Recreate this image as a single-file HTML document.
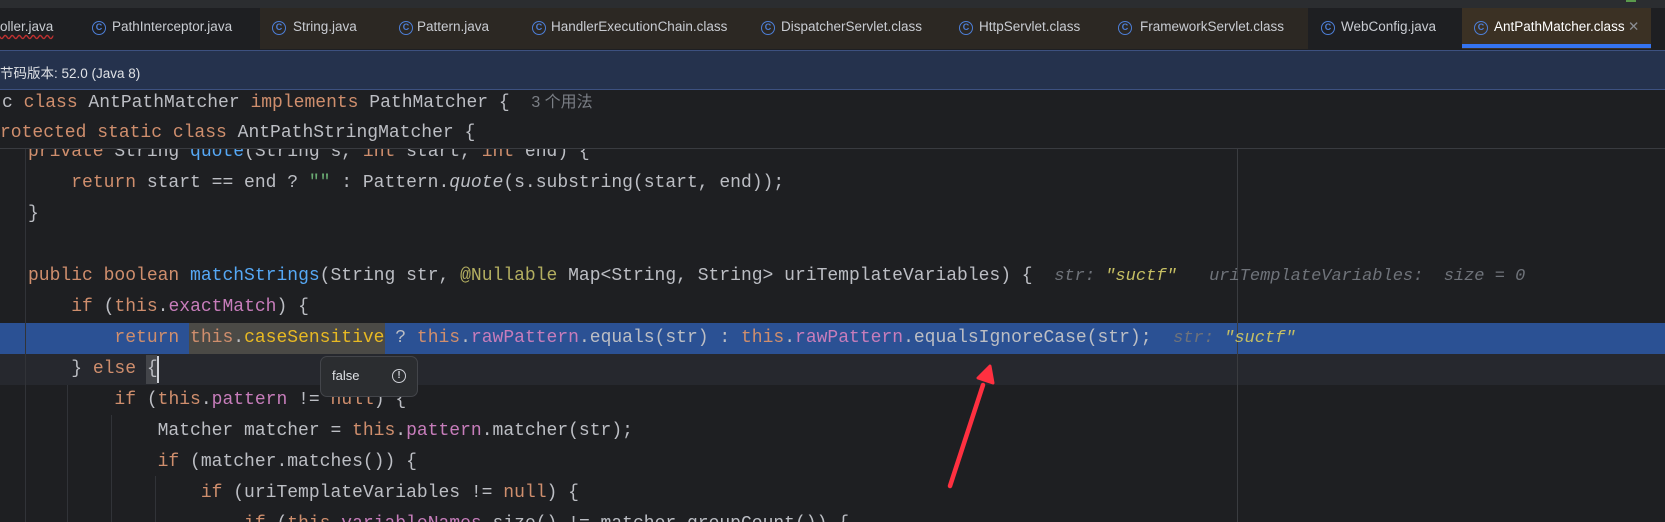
<!DOCTYPE html>
<html><head><meta charset="utf-8"><style>
*{margin:0;padding:0;box-sizing:border-box}
body{width:1665px;height:522px;background:#1e1f22;overflow:hidden;position:relative;font-family:"Liberation Sans","Noto Sans CJK SC",sans-serif}
.abs{position:absolute}
.tab{position:absolute;top:19px;font-size:13.5px;color:#c9ccd2;white-space:nowrap}
.ic{position:absolute;top:21px;width:14px;height:14px;border:1.5px solid #4d7fd8;border-radius:50%;color:#4d7fd8;font-size:9px;line-height:11px;text-align:center;font-weight:bold}
.ln{position:absolute;left:28px;height:31px;line-height:31px;font-family:"Liberation Mono",monospace;font-size:18px;color:#bcbec4;white-space:pre}
.k{color:#cf8e6d}.f{color:#c77dbb}.m{color:#56a8f5}.s{color:#6aab73}.a{color:#b3ae60}
.h{font-style:italic;color:#6f737a;font-size:17px}.hv{font-style:italic;color:#c6bf63;font-size:17px}
.g{position:absolute;width:1px;background:#313338}
</style></head><body>
<div class="abs" style="left:0;top:0;width:1665px;height:8px;background:#2b2d30"></div>
<div class="abs" style="left:0;top:8px;width:1665px;height:41px;background:#1e1f22"></div>
<div class="abs" style="left:260px;top:8px;width:1048px;height:41px;background:#2c2823"></div>
<div class="abs" style="left:1462px;top:8px;width:189px;height:41px;background:#3b3124"></div>
<div class="abs" style="left:1462px;top:44px;width:189px;height:4px;background:#3574f0"></div>
<div class="abs" style="left:1626px;top:0;width:10px;height:2px;background:#5a9a4c"></div>
<div class="tab" style="left:0;text-decoration:underline wavy #c03030;text-underline-offset:3px">oller.java</div>
<div class="ic" style="left:92px">C</div><div class="tab" style="left:112px">PathInterceptor.java</div>
<div class="ic" style="left:272px">C</div><div class="tab" style="left:293px">String.java</div>
<div class="ic" style="left:399px">C</div><div class="tab" style="left:417px">Pattern.java</div>
<div class="ic" style="left:532px">C</div><div class="tab" style="left:551px">HandlerExecutionChain.class</div>
<div class="ic" style="left:761px">C</div><div class="tab" style="left:781px">DispatcherServlet.class</div>
<div class="ic" style="left:959px">C</div><div class="tab" style="left:979px">HttpServlet.class</div>
<div class="ic" style="left:1118px">C</div><div class="tab" style="left:1140px">FrameworkServlet.class</div>
<div class="ic" style="left:1321px">C</div><div class="tab" style="left:1341px">WebConfig.java</div>
<div class="ic" style="left:1474px">C</div><div class="tab" style="left:1494px;color:#fff">AntPathMatcher.class</div>
<div class="tab" style="left:1628px;color:#8a8d93">✕</div>
<div class="abs" style="left:1652px;top:8px;width:13px;height:41px;background:#1e1f22"></div>
<div class="abs" style="left:0;top:50px;width:1665px;height:40px;background:#25324d;border-top:1px solid #3d5180;border-bottom:1px solid #3d5180"></div>
<div class="abs" style="left:0;top:62px;font-size:13.5px;color:#dfe1e5">节码版本: 52.0 (Java 8)</div>
<div class="ln" style="left:2px;top:87px">c <span class="k">class</span> AntPathMatcher <span class="k">implements</span> PathMatcher {  <span style="font-family:'Liberation Sans','Noto Sans CJK SC',sans-serif;color:#7a7e85;font-size:16px">3 个用法</span></div>
<div class="ln" style="left:0;top:118px"><span class="k">rotected static class</span> AntPathStringMatcher {</div>
<div class="abs" style="left:0;top:148px;width:1665px;height:1px;background:#393b40"></div>
<!-- code -->
<div class="abs" style="left:0;top:149px;width:1665px;height:373px;overflow:hidden">
<div class="abs" style="left:0;top:174px;width:1665px;height:31px;background:#2b5194"></div>
<div class="abs" style="left:189px;top:174px;width:196px;height:31px;background:#4b4a46"></div>
<div class="abs" style="left:0;top:205px;width:1665px;height:31px;background:#26282e"></div>
<div class="abs" style="left:146px;top:206px;width:11px;height:29px;background:#43454a"></div>
<div class="abs" style="left:157px;top:207px;width:1.5px;height:27px;background:#ced0d6"></div>
<div class="g" style="left:25px;top:0;height:373px"></div>
<div class="g" style="left:67px;top:236px;height:137px"></div>
<div class="g" style="left:111px;top:266px;height:107px"></div>
<div class="g" style="left:155px;top:327px;height:46px"></div>
<div class="g" style="left:1237px;top:0;height:373px;background:#3a3c40"></div>
<div class="ln" style="top:-12px"><span class="k">private</span> String <span class="m">quote</span>(String s, <span class="k">int</span> start, <span class="k">int</span> end) {</div>
<div class="ln" style="top:19px">    <span class="k">return</span> start == end ? <span class="s">""</span> : Pattern.<i>quote</i>(s.substring(start, end));</div>
<div class="ln" style="top:50px">}</div>
<div class="ln" style="top:112px"><span class="k">public boolean</span> <span class="m">matchStrings</span>(String str, <span class="a">@Nullable</span> Map&lt;String, String&gt; uriTemplateVariables) {  <span class="h">str: </span><span class="hv">"suctf"</span>   <span class="h">uriTemplateVariables:  size = 0</span></div>
<div class="ln" style="top:143px">    <span class="k">if</span> (<span class="k">this</span>.<span class="f">exactMatch</span>) {</div>
<div class="ln" style="top:174px">        <span class="k">return this</span>.<span style="color:#e8b923">caseSensitive</span> ? <span class="k">this</span>.<span class="f">rawPattern</span>.equals(str) : <span class="k">this</span>.<span class="f">rawPattern</span>.equalsIgnoreCase(str);  <span class="h">str: </span><span class="hv">"suctf"</span></div>
<div class="ln" style="top:205px">    } <span class="k">else</span> {</div>
<div class="ln" style="top:236px">        <span class="k">if</span> (<span class="k">this</span>.<span class="f">pattern</span> != <span class="k">null</span>) {</div>
<div class="ln" style="top:267px">            Matcher matcher = <span class="k">this</span>.<span class="f">pattern</span>.matcher(str);</div>
<div class="ln" style="top:298px">            <span class="k">if</span> (matcher.matches()) {</div>
<div class="ln" style="top:329px">                <span class="k">if</span> (uriTemplateVariables != <span class="k">null</span>) {</div>
<div class="ln" style="top:360px">                    <span class="k">if</span> (<span class="k">this</span>.<span class="f">variableNames</span>.size() != matcher.groupCount()) {</div>
</div>
<div class="abs" style="left:320px;top:356px;width:98px;height:41px;background:#2b2d30;border:1px solid #43454a;border-radius:7px"></div>
<div class="abs" style="left:332px;top:368px;font-size:13px;color:#dfe1e5">false</div>
<div class="abs" style="left:392px;top:369px;width:14px;height:14px;border:1.5px solid #ced0d6;border-radius:50%;color:#ced0d6;font-size:10px;line-height:11px;text-align:center;font-weight:bold">!</div>
<svg class="abs" style="left:0;top:0" width="1665" height="522"><line x1="950" y1="486" x2="983" y2="385" stroke="#ff3040" stroke-width="4.5" stroke-linecap="round"/><polygon points="990,366 978,378 993,383" fill="#ff3040" stroke="#ff3040" stroke-width="3" stroke-linejoin="round"/></svg>
</body></html>
